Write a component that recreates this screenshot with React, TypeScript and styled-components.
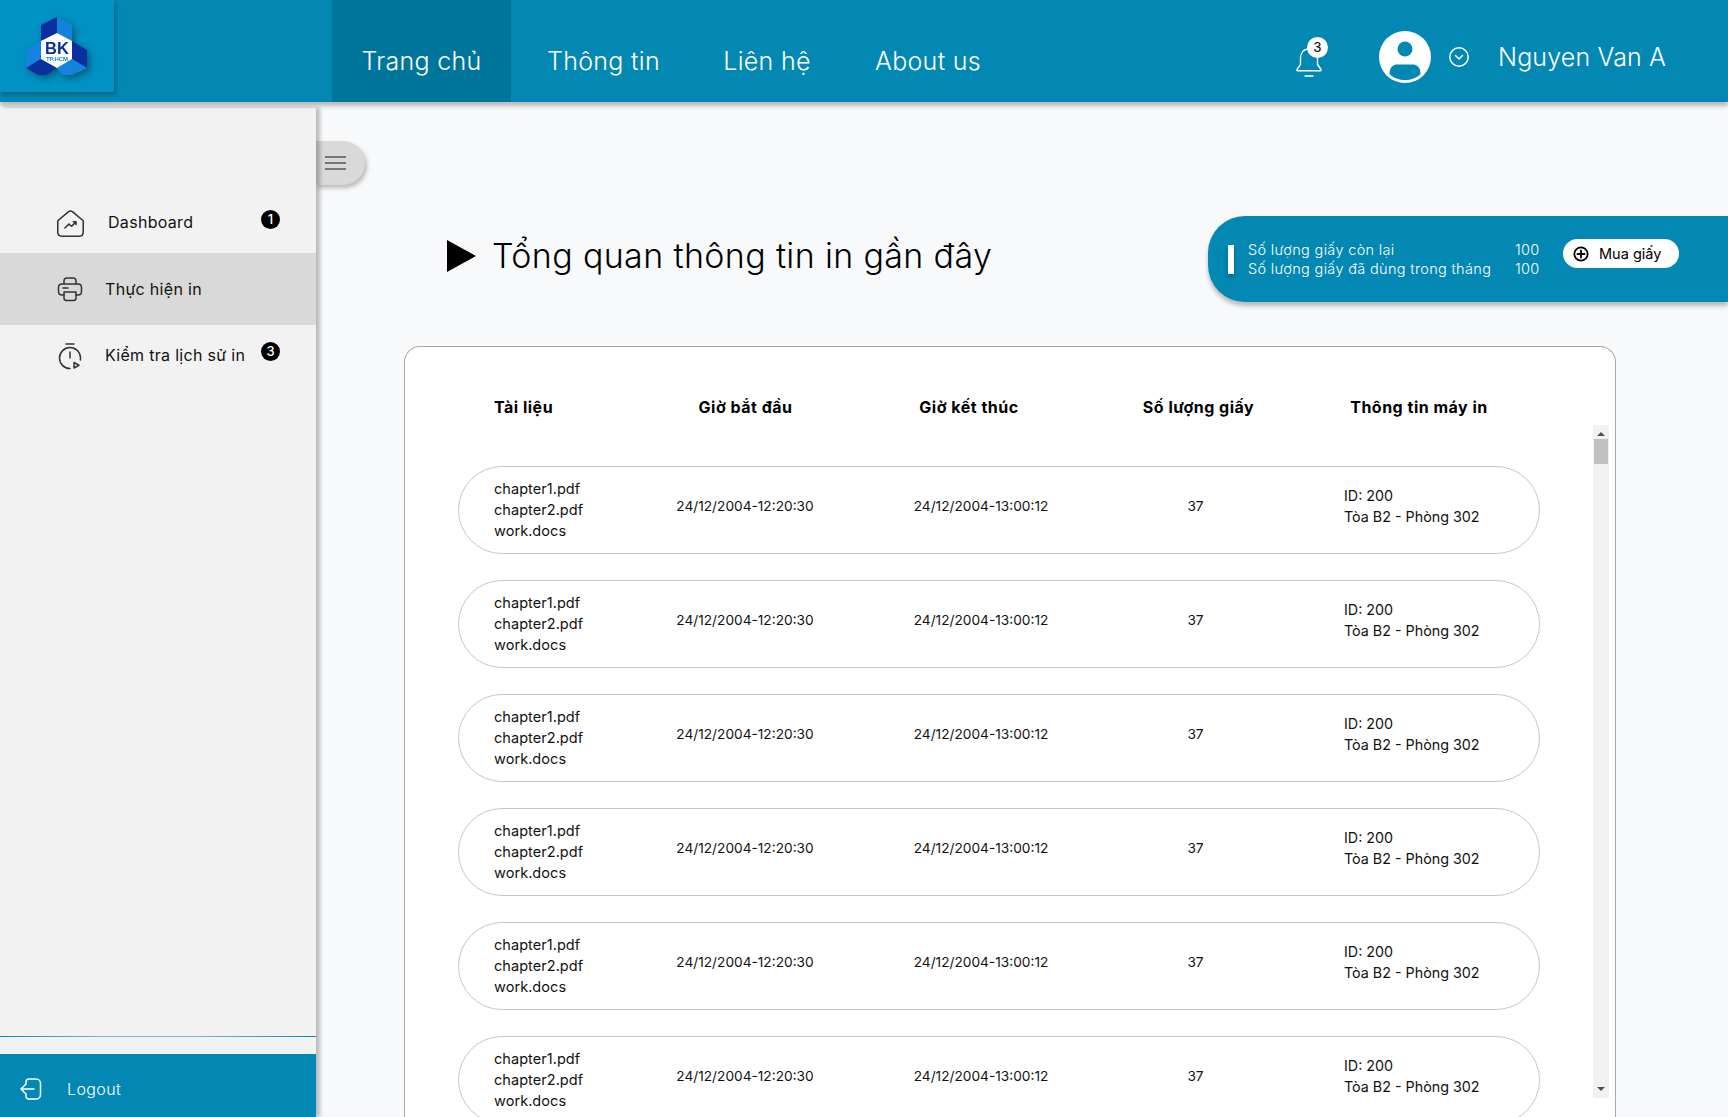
import React from "react";
import styled, { createGlobalStyle } from "styled-components";

const Global = createGlobalStyle`
  html, body { margin: 0; padding: 0; height: 100%; overflow: hidden; background: #f8f9fb; }
  * { box-sizing: border-box; }
  body { font-family: Inter, "Noto Sans", "Liberation Sans", sans-serif; color: #000; }
`;

const Page = styled.div`
  display: flex;
  flex-direction: column;
  width: 1728px;
  height: 1117px;
  overflow: hidden;
`;
const Header = styled.header`
  position: relative;
  z-index: 3;
  flex: 0 0 102px;
  display: flex;
  align-items: flex-start;
  background: #0388b4;
  box-shadow: 0 4px 4px rgba(0, 0, 0, 0.25);
  color: #fff;
`;
const LogoBox = styled.div`
  width: 114px;
  height: 92px;
  background: #0291c3;
  box-shadow: 2px 3px 4px rgba(0, 0, 0, 0.25);
  svg { display: block; filter: drop-shadow(3px 3px 3px rgba(0, 0, 0, 0.35)); }
`;
const Nav = styled.nav`
  display: flex;
  gap: 7px;
  margin-left: 218px;
  height: 102px;
`;
const NavItem = styled.a<{ $w: number; $active?: boolean }>`
  display: flex;
  align-items: center;
  justify-content: center;
  width: ${(p) => p.$w}px;
  padding-top: 19px;
  font-size: 25px;
  font-weight: 300;
  letter-spacing: 0.3px;
  background: ${(p) => (p.$active ? "#00759c" : "transparent")};
`;
const HeaderRight = styled.div`
  display: flex;
  align-items: center;
  margin-left: auto;
  height: 102px;
  padding: 12px 62px 0 0;
`;
const BellWrap = styled.div`
  position: relative;
  width: 30px;
  height: 34px;
  margin: 8px 55px 0 0;
  svg { display: block; }
`;
const BellBadge = styled.span`
  position: absolute;
  top: -7px;
  left: 13px;
  width: 21px;
  height: 21px;
  border-radius: 50%;
  background: #fff;
  color: #000;
  font-family: "Liberation Sans", sans-serif;
  font-size: 14px;
  line-height: 21px;
  text-align: center;
`;
const AvatarIcon = styled.svg`
  display: block;
  margin-right: 18px;
`;
const ChevronIcon = styled.svg`
  display: block;
  margin-right: 29px;
`;
const UserName = styled.div`
  width: 168px;
  font-size: 25px;
  font-weight: 300;
  letter-spacing: 0.15px;
  white-space: nowrap;
`;

const Body = styled.div`
  flex: 1;
  display: flex;
  min-height: 0;
`;
const Sidebar = styled.aside`
  position: relative;
  z-index: 2;
  flex: 0 0 316px;
  display: flex;
  flex-direction: column;
  margin-top: 6px;
  padding-top: 82px;
  background: #f2f2f2;
  box-shadow: 4px 0 4px rgba(0, 0, 0, 0.25);
`;
const MenuItem = styled.div<{ $h: number; $active?: boolean }>`
  display: flex;
  align-items: center;
  height: ${(p) => p.$h}px;
  padding-left: 56px;
  background: ${(p) => (p.$active ? "#d9d9d9" : "transparent")};
`;
const MenuIcon = styled.svg<{ $mt?: number; $ml?: number }>`
  flex: none;
  display: block;
  margin-top: ${(p) => p.$mt ?? 0}px;
  margin-left: ${(p) => p.$ml ?? 0}px;
`;
const MenuLabel = styled.span<{ $ml: number }>`
  margin-left: ${(p) => p.$ml}px;
  font-size: 16px;
  font-weight: 400;
  letter-spacing: 0.3px;
  white-space: nowrap;
  color: #111;
`;
const MenuBadge = styled.span<{ $mb: number }>`
  margin: 0 36px ${(p) => p.$mb}px auto;
  width: 19px;
  height: 19px;
  border-radius: 50%;
  background: #000;
  color: #fff;
  font-size: 13px;
  line-height: 19px;
  font-weight: 500;
  text-align: center;
`;
const SideSpacer = styled.div`
  flex: 1;
`;
const SideLine = styled.div`
  height: 1px;
  margin-bottom: 17px;
  background: linear-gradient(90deg, #0388b4 0%, #78bdd4 35%, #78bdd4 60%, #0388b4 100%);
`;
const Logout = styled.div`
  flex: 0 0 63px;
  display: flex;
  align-items: center;
  padding: 7px 0 0 20px;
  background: #0388b4;
  color: #fff;
  svg { display: block; }
`;
const LogoutLabel = styled.span`
  margin-left: 25px;
  font-size: 16px;
  font-weight: 300;
  letter-spacing: 0.4px;
`;

const Main = styled.main`
  flex: 1;
  display: flex;
  flex-direction: column;
  min-width: 0;
  padding-top: 39px;
`;
const Toggle = styled.button`
  display: flex;
  align-items: center;
  width: 49px;
  height: 44px;
  padding: 0 0 0 9px;
  border: 0;
  border-radius: 0 22px 22px 0;
  background: #d9d9d9;
  box-shadow: 2px 3px 4px rgba(0, 0, 0, 0.25);
  svg { display: block; }
`;
const TitleRow = styled.div`
  display: flex;
  align-items: center;
  justify-content: space-between;
  height: 86px;
  margin-top: 31px;
  padding-left: 131px;
`;
const TitleGroup = styled.div`
  display: flex;
  align-items: center;
  gap: 16px;
  margin-bottom: 7px;
  svg { display: block; }
`;
const Title = styled.h1`
  margin: 0;
  font-size: 34px;
  font-weight: 300;
  letter-spacing: 0.35px;
  white-space: nowrap;
`;
const InfoPill = styled.div`
  display: flex;
  align-items: center;
  width: 520px;
  height: 86px;
  padding-left: 20px;
  border-radius: 37px 0 0 37px;
  background: #0388b4;
  box-shadow: 0 4px 4px rgba(0, 0, 0, 0.25);
  color: #fff;
`;
const InfoBar = styled.div`
  width: 6px;
  height: 29px;
  background: #fff;
  box-shadow: 0 3px 4px rgba(0, 0, 0, 0.25);
`;
const InfoGrid = styled.div`
  display: grid;
  grid-template-columns: 267px 37px;
  margin-left: 14px;
  font-size: 14.5px;
  font-weight: 300;
  line-height: 19px;
  letter-spacing: 0.33px;
  white-space: nowrap;
`;
const BuyButton = styled.button`
  display: flex;
  align-items: center;
  width: 116px;
  height: 29px;
  margin: 0 0 11px 11px;
  padding: 0 0 0 10px;
  border: 0;
  border-radius: 14.5px;
  background: #fff;
  color: #000;
  font-family: inherit;
  font-size: 14.5px;
  font-weight: 400;
  svg { display: block; margin: 0 10px 0 0; }
`;
const Card = styled.section`
  flex: 1;
  display: flex;
  flex-direction: column;
  min-height: 0;
  margin: 44px 112px -40px 88px;
  padding: 48px 6px 0 53px;
  border: 1.5px solid #a8a8a8;
  border-bottom: 0;
  border-radius: 16px 16px 0 0;
  background: #fff;
  overflow: hidden;
`;
const TableHead = styled.div`
  display: grid;
  grid-template-columns: 126px 251px 196px 263px 178px;
  align-items: center;
  height: 24px;
  padding-left: 36px;
  font-size: 16px;
  font-weight: 700;
  letter-spacing: 0.5px;
  white-space: nowrap;
`;
const HeadCell = styled.div<{ $left?: boolean }>`
  text-align: ${(p) => (p.$left ? "left" : "center")};
`;
const TableBody = styled.div`
  display: flex;
  justify-content: space-between;
  margin-top: 6px;
`;
const RowList = styled.div`
  display: flex;
  flex-direction: column;
  gap: 26px;
  width: 1082px;
  padding-top: 41px;
`;
const Row = styled.div`
  flex: none;
  display: grid;
  grid-template-columns: 125px 250px 222px 207px 1fr;
  align-items: center;
  height: 88px;
  padding-left: 36px;
  border: 1px solid #c6c6c6;
  border-radius: 44px;
  font-size: 14.3px;
  font-weight: 400;
  color: #111;
  white-space: nowrap;
`;
const Files = styled.div`
  margin: 0 0 2px -1px;
  font-size: 14.5px;
  line-height: 21px;
  letter-spacing: 0.05px;
`;
const Cell = styled.div`
  padding-bottom: 9px;
  font-size: 13.7px;
  text-align: center;
`;
const PrinterCell = styled.div`
  padding: 0 0 9px 45px;
  line-height: 21px;
`;
const Scrollbar = styled.div`
  flex: none;
  display: flex;
  flex-direction: column;
  align-items: center;
  width: 16px;
  height: 673px;
  background: #f1f1f1;
`;
const ScrollArrow = styled.div<{ $down?: boolean }>`
  flex: none;
  width: 0;
  height: 0;
  margin: ${(p) => (p.$down ? "auto 0 7px" : "7px 0 0")};
  border-left: 4px solid transparent;
  border-right: 4px solid transparent;
  ${(p) => (p.$down ? "border-top: 4px solid #505050;" : "border-bottom: 4px solid #505050;")}
`;
const ScrollThumb = styled.div`
  flex: none;
  width: 14px;
  height: 25px;
  margin-top: 3px;
  background: #c1c1c1;
`;

const Logo = () => (
  <svg width="114" height="92" viewBox="0 0 114 92">
    <polygon points="41,25 57,17 57,33 41,41" fill="#0b2f9f" />
    <polygon points="57,17 72,25 72,41 57,33" fill="#1483de" />
    <polygon points="72,41 87,50 87,68 72,59" fill="#0b2f9f" />
    <polygon points="57,68 72,59 87,68 72,75 62,75" fill="#1483de" />
    <polygon points="41,41 41,59 26,68 26,50" fill="#1483de" />
    <polygon points="26,68 41,59 57,68 46,75 38,75" fill="#0b2f9f" />
    <polygon points="57,33 72,41 72,59 57,68 41,59 41,41" fill="#fff" />
    <text x="57" y="53.5" textAnchor="middle" fontFamily="Liberation Sans, sans-serif" fontWeight="700" fontSize="16.5" fill="#0b2f9f">BK</text>
    <text x="57" y="60.5" textAnchor="middle" fontFamily="Liberation Sans, sans-serif" fontWeight="700" fontSize="6" fill="#1483de">TP.HCM</text>
  </svg>
);

const rows = [0, 1, 2, 3, 4, 5];

export default function App() {
  return (
    <Page>
      <Global />
      <Header>
        <LogoBox><Logo /></LogoBox>
        <Nav>
          <NavItem $w={179} $active>Trang chủ</NavItem>
          <NavItem $w={171}>Thông tin</NavItem>
          <NavItem $w={142}>Liên hệ</NavItem>
          <NavItem $w={166}>About us</NavItem>
        </Nav>
        <HeaderRight>
          <BellWrap>
            <svg width="30" height="34" viewBox="0 0 30 34" fill="none" stroke="#fff" strokeWidth="1.4" strokeLinecap="round" strokeLinejoin="round">
              <path d="M15 5C9.500 5 6.500 9 6.500 14v6.500L3 25.500c-.4.700 0 1.300.8 1.300h22.400c.8 0 1.200-.6.800-1.300L23.500 20.500V14C23.500 9 20.500 5 15 5Z" />
              <path d="M11 32h8" />
            </svg>
            <BellBadge>3</BellBadge>
          </BellWrap>
          <AvatarIcon width="52" height="52" viewBox="0 0 52 52">
            <circle cx="26" cy="26" r="26" fill="#fff" />
            <circle cx="26" cy="18" r="7.500" fill="#0388b4" />
            <path d="M10.500 43c0-7 3.500-9.500 8-9.500h15c4.500 0 8 2.500 8 9.500-4 4-10 6-15.500 6s-11.500-2-15.500-6Z" fill="#0388b4" />
          </AvatarIcon>
          <ChevronIcon width="20" height="20" viewBox="0 0 20 20" fill="none" stroke="#fff" strokeWidth="1.500" strokeLinecap="round" strokeLinejoin="round">
            <circle cx="10" cy="10" r="9.200" />
            <path d="M6.500 8.500 10 12l3.500-3.500" />
          </ChevronIcon>
          <UserName>Nguyen Van A</UserName>
        </HeaderRight>
      </Header>
      <Body>
        <Sidebar>
          <MenuItem $h={63}>
            <MenuIcon $mt={4} $ml={-1.5} width="31" height="31" viewBox="0 0 28 28" fill="none" stroke="#333" strokeWidth="1.400" strokeLinecap="round" strokeLinejoin="round">
              <path d="M2.500 11.500 12 3.500c1.200-1 2.800-1 4 0l9.500 8v10.500c0 2.200-1.500 3.500-3.500 3.500H6c-2 0-3.500-1.300-3.500-3.500Z" />
              <path d="M9 18l3.500-3.500 2.500 2 4-4M16.500 12.500H19V15" />
            </MenuIcon>
            <MenuLabel $ml={22.5}>Dashboard</MenuLabel>
            <MenuBadge $mb={4}>1</MenuBadge>
          </MenuItem>
          <MenuItem $h={72} $active>
            <MenuIcon width="28" height="28" viewBox="0 0 28 28" fill="none" stroke="#333" strokeWidth="1.500" strokeLinecap="round" strokeLinejoin="round">
              <path d="M8 9V6c0-2 1.200-3 3-3h6c1.800 0 3 1 3 3v3" />
              <path d="M8 20H6c-2 0-3.500-1.500-3.500-3.500v-4C2.500 10.500 4 9 6 9h16c2 0 3.500 1.500 3.500 3.500v4c0 2-1.500 3.500-3.500 3.500h-2" />
              <path d="M8 17h12v6c0 1.500-1 2.500-2.500 2.500h-7C9 25.500 8 24.500 8 23Z" />
              <path d="M7 13h5" />
            </MenuIcon>
            <MenuLabel $ml={21}>Thực hiện in</MenuLabel>
          </MenuItem>
          <MenuItem $h={60}>
            <MenuIcon $mt={1} width="28" height="28" viewBox="0 0 28 28" fill="none" stroke="#333" strokeWidth="1.500" strokeLinecap="round" strokeLinejoin="round">
              <path d="M10 2h8" />
              <path d="M14 26.500C8 26.500 3.500 21.700 3.500 16S8.300 5.500 14 5.500 24.500 10 24.500 16c0 .8-.1 1.500-.2 2" />
              <path d="M14 10v6" />
              <path d="M18 20.500v5.500l5-2.750Z" />
            </MenuIcon>
            <MenuLabel $ml={21}>Kiểm tra lịch sử in</MenuLabel>
            <MenuBadge $mb={8}>3</MenuBadge>
          </MenuItem>
          <SideSpacer />
          <SideLine />
          <Logout>
            <svg width="22" height="22" viewBox="0 0 22 22" fill="none" stroke="#fff" strokeWidth="1.500" strokeLinecap="round" strokeLinejoin="round">
              <path d="M9 1h7c2.500 0 4.500 2 4.500 4.500v11c0 2.500-2 4.500-4.500 4.500H9c-2 0-3-1.500-3-3v-2M6 6V4c0-1.500 1-3 3-3" />
              <path d="M1 11h13M5.500 6.500 1 11l4.500 4.500" />
            </svg>
            <LogoutLabel>Logout</LogoutLabel>
          </Logout>
        </Sidebar>
        <Main>
          <Toggle aria-label="menu">
            <svg width="22" height="16" viewBox="0 0 22 16" stroke="#555" strokeWidth="1.600">
              <path d="M0 2h21M0 8h21M0 14h21" />
            </svg>
          </Toggle>
          <TitleRow>
            <TitleGroup>
              <svg width="29" height="32" viewBox="0 0 29 32"><polygon points="0,0 29,16 0,32" fill="#000" /></svg>
              <Title>Tổng quan thông tin in gần đây</Title>
            </TitleGroup>
            <InfoPill>
              <InfoBar />
              <InfoGrid>
                <span>Số lượng giấy còn lại</span>
                <span>100</span>
                <span>Số lượng giấy đã dùng trong tháng</span>
                <span>100</span>
              </InfoGrid>
              <BuyButton>
                <svg width="16" height="16" viewBox="0 0 18 18" fill="none" stroke="#000" strokeWidth="2" strokeLinecap="round">
                  <circle cx="9" cy="9" r="7.500" />
                  <path d="M9 5v8M5 9h8" />
                </svg>
                Mua giấy
              </BuyButton>
            </InfoPill>
          </TitleRow>
          <Card>
            <TableHead>
              <HeadCell $left>Tài liệu</HeadCell>
              <HeadCell>Giờ bắt đầu</HeadCell>
              <HeadCell>Giờ kết thúc</HeadCell>
              <HeadCell>Số lượng giấy</HeadCell>
              <HeadCell>Thông tin máy in</HeadCell>
            </TableHead>
            <TableBody>
              <RowList>
                {rows.map((i) => (
                  <Row key={i}>
                    <Files>chapter1.pdf<br />chapter2.pdf<br />work.docs</Files>
                    <Cell>24/12/2004-12:20:30</Cell>
                    <Cell>24/12/2004-13:00:12</Cell>
                    <Cell>37</Cell>
                    <PrinterCell>ID: 200<br />Tòa B2 - Phòng 302</PrinterCell>
                  </Row>
                ))}
              </RowList>
              <Scrollbar>
                <ScrollArrow />
                <ScrollThumb />
                <ScrollArrow $down />
              </Scrollbar>
            </TableBody>
          </Card>
        </Main>
      </Body>
    </Page>
  );
}
